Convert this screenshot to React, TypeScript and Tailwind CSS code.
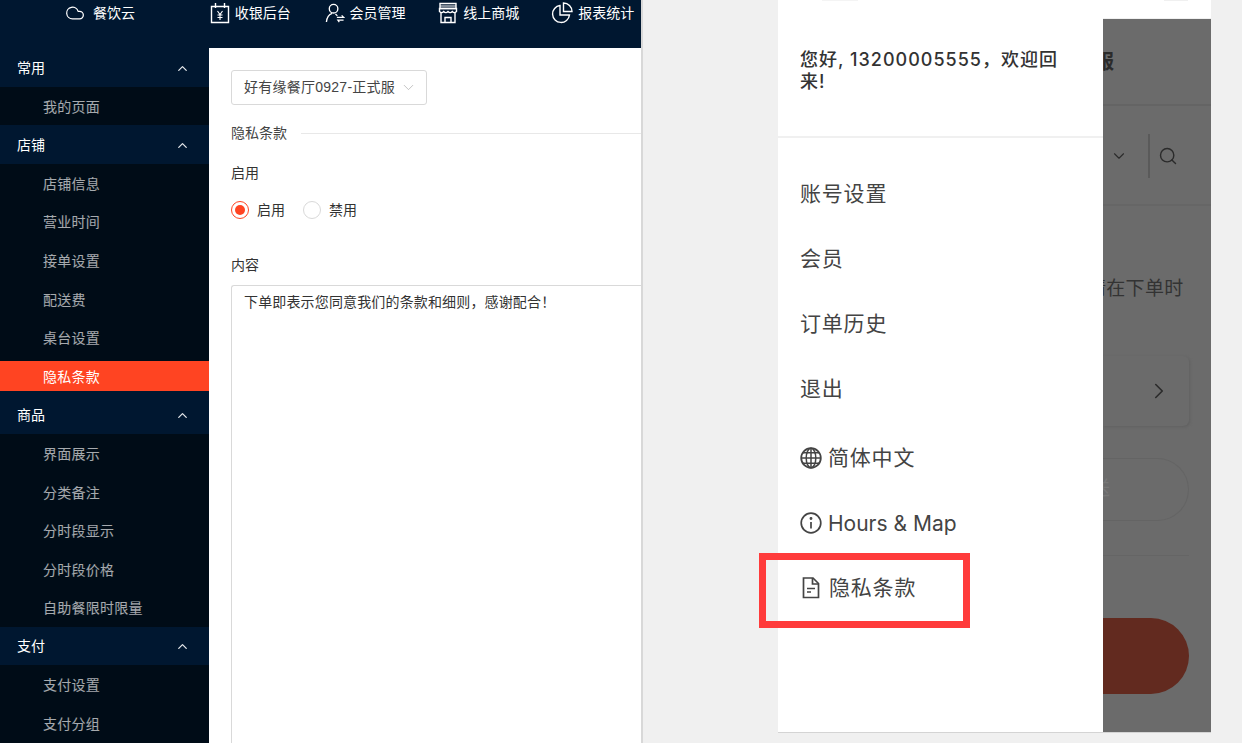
import React from 'react';
import { ChevronUp, ChevronDown, ChevronRight, Search, Cloud } from 'lucide-react';

const cjk = 'font-["Liberation_Sans","Noto_Sans_CJK_SC",sans-serif]';
const phone = 'font-["Inter","Noto_Sans_CJK_SC",sans-serif]';

const YenIcon = () => (
  <svg width="20" height="22" viewBox="0 0 20 22" fill="none" stroke="#fff" strokeWidth="1.4">
    <path d="M1.5 4.5h17v16h-17z" />
    <path d="M5.5 1v5M14.5 1v5" />
    <path d="M7.5 9l2.5 3.5L12.500 9M7.500 13h5M7.500 15.500h5M10 12.500V18" strokeWidth="1.1" />
  </svg>
);

const MemberIcon = () => (
  <svg width="20" height="22" viewBox="0 0 21 22" fill="none" stroke="#fff" strokeWidth="1.400">
    <circle cx="9" cy="6.500" r="4.500" />
    <path d="M1.500 20.500c.5-5 3-8 6-9M11 12l2 2" />
    <path d="M12.500 15.500h7l-2-2M19.500 18.500h-6l1.500 2" strokeWidth="1.300" />
  </svg>
);

const StoreIcon = () => (
  <svg width="20" height="22" viewBox="0 0 20 22" fill="none" stroke="#fff" strokeWidth="1.400">
    <path d="M2 1.500h16v5H2z" />
    <path d="M2 4h16" strokeWidth="1" />
    <path d="M1.500 6.500h17v3c-1.500 1.500-3 1.500-4.200 0-1.300 1.500-3 1.500-4.300 0-1.300 1.500-3 1.500-4.300 0-1.200 1.500-2.700 1.500-4.200 0z" />
    <path d="M3 10.500v10h14v-10M7 20.500v-5h6v5" />
  </svg>
);

const PieIcon = () => (
  <svg width="22" height="22" viewBox="0 0 22 22" fill="none" stroke="#fff" strokeWidth="1.400">
    <path d="M9 3.500a8.500 8.500 0 1 0 9.500 9.500H9z" />
    <path d="M12.500 1a8.500 8.500 0 0 1 8.500 8.500h-8.500z" />
  </svg>
);

const GlobeIcon = () => (
  <svg width="22" height="22" viewBox="0 0 22 22" fill="none" stroke="#444" strokeWidth="1.500">
    <circle cx="11" cy="11" r="9.800" strokeWidth="1.800" />
    <ellipse cx="11" cy="11" rx="4.800" ry="9.800" />
    <path d="M11 1v20M1.500 11h19M3 5.800h16M3 16.200h16" />
  </svg>
);

const InfoIcon = () => (
  <svg width="22" height="22" viewBox="0 0 22 22" fill="none" stroke="#444" strokeWidth="1.700">
    <circle cx="11" cy="11" r="9.800" />
    <path d="M11 10v6.500" />
    <circle cx="11" cy="6.500" r=".6" fill="#444" />
  </svg>
);

const FileIcon = () => (
  <svg width="18" height="22" viewBox="0 0 18 22" fill="none" stroke="#444" strokeWidth="1.700">
    <path d="M1.500 1h9.500l5.500 5.500V20.500h-15z" />
    <path d="M10.500 1v6h6" />
    <path d="M5 11.500h8M5 15h4" strokeWidth="1.300" />
  </svg>
);

const nav = [
  { icon: <YenIcon />, label: '收银后台', cls: 'w-[115px]' },
  { icon: <MemberIcon />, label: '会员管理', cls: 'w-[114px]' },
  { icon: <StoreIcon />, label: '线上商城', cls: 'w-[113px]' },
  { icon: <PieIcon />, label: '报表统计', cls: 'w-[90px]' },
];

const groups = [
  { title: '常用', items: ['我的页面'] },
  { title: '店铺', items: ['店铺信息', '营业时间', '接单设置', '配送费', '桌台设置', '隐私条款'] },
  { title: '商品', items: ['界面展示', '分类备注', '分时段显示', '分时段价格', '自助餐限时限量'] },
  { title: '支付', items: ['支付设置', '支付分组', '支付方式'] },
];

const Sidebar = () => (
  <div className="w-[209px] shrink-0 bg-[#001730] text-[14px]">
    {groups.map((g) => (
      <div key={g.title}>
        <div className="flex h-[38.5px] items-center justify-between pl-[17px] pr-[19px] pt-[2px] text-white">
          <span>{g.title}</span>
          <ChevronUp size={15} strokeWidth={2} className="text-white/90" />
        </div>
        <div className="flex flex-col gap-[8.6px] bg-[#000c17] pt-[4.3px]">
          {g.items.map((item) => {
            const active = item === '隐私条款';
            return (
              <div
                key={item}
                className={
                  active
                    ? 'flex h-[30px] items-center bg-[#ff4422] pl-[43px] pt-[3px] tracking-[.25px] text-white'
                    : 'flex h-[30px] items-center pl-[43px] pt-[3px] tracking-[.25px] text-white/65'
                }
              >
                {item}
              </div>
            );
          })}
        </div>
        {/* the selected row has no dark gap below it */}
        <div className={g.title === '店铺' ? 'h-[4.3px]' : 'h-[4.3px] bg-[#000c17]'} />
      </div>
    ))}
  </div>
);

const Admin = () => (
  <div className={`flex h-full w-[643px] shrink-0 flex-col overflow-hidden border-r-2 border-[#d8d8d8] ${cjk}`}>
    <div className="flex h-12 shrink-0 bg-[#001730] pt-[3px] text-[14px] text-white">
      <div className="flex h-5 w-[210px] items-center pl-[65px]">
        <Cloud size={20} strokeWidth={1.500} />
        <span className="ml-2">餐饮云</span>
      </div>
      {nav.map((n) => (
        <div key={n.label} className={`flex h-5 items-center gap-[5px] ${n.cls}`}>
          {n.icon}
          <span className="whitespace-nowrap">{n.label}</span>
        </div>
      ))}
    </div>
    <div className="flex min-h-0 flex-1">
      <Sidebar />
      <div className="min-w-0 flex-1 bg-white pl-[22px] pt-[22px] text-[14px] text-[#333]">
        <div className="flex h-[35px] w-[196px] items-center justify-between rounded-[3px] border border-[#d9d9d9] pl-3 pr-[9px]">
          <span className="whitespace-nowrap tracking-[.25px] text-[#444]">好有缘餐厅0927-正式服</span>
          <ChevronDown size={17} strokeWidth={1} className="shrink-0 text-[#aaa]" />
        </div>
        <div className="mt-[17px] flex h-[22px] items-center gap-[14px]">
          <span className="text-[#444]">隐私条款</span>
          <div className="h-px flex-1 bg-[#e8e8e8]" />
        </div>
        <div className="mt-[18px] h-[22px] leading-[22px]">启用</div>
        <div className="mt-[15px] flex h-[22px] items-center">
          <span className="flex h-[18px] w-[18px] items-center justify-center rounded-full border border-[#ff4422]">
            <span className="h-[10px] w-[10px] rounded-full bg-[#ff4422]" />
          </span>
          <span className="ml-[8px]">启用</span>
          <span className="ml-[18px] h-[18px] w-[18px] rounded-full border border-[#d9d9d9]" />
          <span className="ml-[8px]">禁用</span>
        </div>
        <div className="mt-[33px] h-[22px] leading-[22px]">内容</div>
        <div className="mt-[9px] h-[600px] rounded-l-[3px] border border-r-0 border-[#d9d9d9] pl-3 pt-[6px] leading-[20px] tracking-[.15px] text-[#333]">
          下单即表示您同意我们的条款和细则，感谢配合！
        </div>
      </div>
    </div>
  </div>
);

const drawerItems = ['账号设置', '会员', '订单历史', '退出'];
const iconItems = [
  { icon: <GlobeIcon />, label: '简体中文', track: 'tracking-[.8px]' },
  { icon: <InfoIcon />, label: 'Hours & Map', track: 'mt-[2px] tracking-normal' },
];

const Drawer = () => (
  <div className={`w-[325px] shrink-0 bg-white text-[#444] ${phone}`}>
    <div className="h-[119px] border-b-2 border-[#f0f0f0] pl-[22px] pr-[40px] pt-[30px]">
      <p className="text-[18px] font-medium leading-[22px] tracking-[1px] text-[#333]">
        您好, 13200005555，欢迎回来!
      </p>
    </div>
    <div className="flex flex-col pl-[22px] pt-[23px] text-[21px] tracking-[.8px]">
      {drawerItems.map((t) => (
        <div key={t} className="flex h-[65px] items-center">
          {t}
        </div>
      ))}
      <div className="h-1" />
      {iconItems.map((t) => (
        <div key={t.label} className="flex h-[65px] items-center gap-[6px]">
          {t.icon}
          <span className={t.track}>{t.label}</span>
        </div>
      ))}
      <div className="relative flex h-[65px] items-center gap-[9px] pl-[2px]">
        <FileIcon />
        <span>隐私条款</span>
        <div className="absolute -left-[41px] -top-[2px] h-[75px] w-[211px] border-[7px] border-[#ff3b3b]" />
      </div>
    </div>
  </div>
);

const Backdrop = () => (
  <div className={`min-w-0 flex-1 overflow-hidden bg-[#6b6b6b] text-[#2b2b2b] shadow-[0_-1px_0_#f0f0f0] ${phone}`}>
    <div className="flex h-[87px] items-center border-b-2 border-[#646464] font-bold">
      <span className="-ml-[9px] text-[20px]">服</span>
    </div>
    <div className="flex h-[100px] items-center border-b-2 border-[#666] pt-[2px]">
      <ChevronDown size={18} strokeWidth={1.500} className="ml-[7px]" />
      <div className="ml-[20px] h-[44px] w-[2px] bg-[#5a5a5a]" />
      <Search size={20} strokeWidth={1.700} className="ml-[8px]" />
    </div>
    <div className="-ml-[16px] mt-[69px] whitespace-nowrap text-[19px] leading-[28px] tracking-[.3px] text-[#333]">
      请在下单时
    </div>
    <div className="mr-[22px] mt-[53px] flex h-[70px] items-center justify-end rounded-r-[6px] shadow-[1px_1px_3px_#606060]">
      <ChevronRight size={26} strokeWidth={1.500} className="mr-[17px]" />
    </div>
    <div className="mr-[22px] mt-[32px] flex h-[63px] items-center rounded-r-[32px] border border-l-0 border-[#646464] text-[19px] text-[#777]">
      <span className="-ml-[12px]">送</span>
    </div>
    <div className="mr-[22px] mt-[34px] h-px bg-[#656565]" />
    <div className="mr-[22px] mt-[62px] h-[76px] rounded-r-[38px] bg-[#622a1f]" />
  </div>
);

const Preview = () => (
  <div className="h-full min-w-0 flex-1 bg-[#f0f0f0] pl-[135px] pr-[31px]">
    <div className="flex h-[733px] flex-col border-b border-[#d4d4d4] bg-white">
      {/* tail end of the page title scrolled off the top */}
      <div className="flex h-[19px] shrink-0 items-start">
        <div className="ml-[44px] h-px w-[36px] bg-[#f4f4f4]" />
        <div className="ml-[306px] h-px w-[24px] bg-[#f0f0f0]" />
      </div>
      <div className="flex min-h-0 flex-1">
        <Drawer />
        <Backdrop />
      </div>
    </div>
  </div>
);

export default function App() {
  return (
    <div className="flex h-[743px] w-[1242px] overflow-hidden">
      <Admin />
      <Preview />
    </div>
  );
}
